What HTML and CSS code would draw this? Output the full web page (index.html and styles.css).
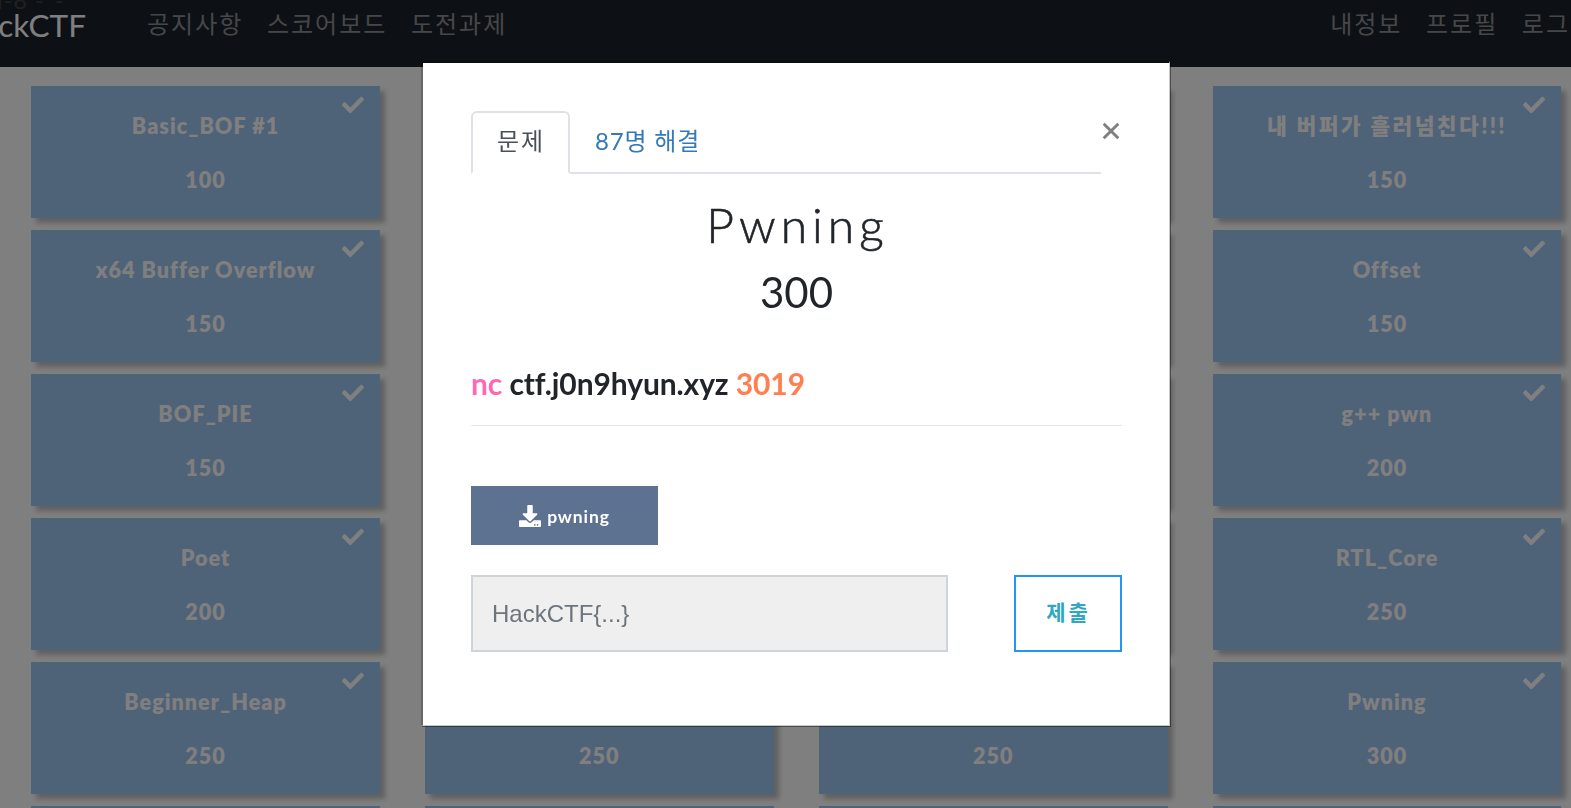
FILE: index.html
```html
<!DOCTYPE html>
<html lang="ko">
<head>
<meta charset="utf-8">
<title>HackCTF</title>
<link rel="stylesheet" href="styles.css">
</head>
<body>
<svg class="defs" aria-hidden="true">
  <symbol id="check" viewBox="0 0 512 512"><path d="M173.898 439.404l-166.4-166.4c-9.997-9.997-9.997-26.206 0-36.204l36.203-36.204c9.997-9.998 26.207-9.998 36.204 0L192 312.69 432.095 72.596c9.997-9.997 26.207-9.997 36.204 0l36.203 36.204c9.997 9.997 9.997 26.206 0 36.204l-294.4 294.401c-9.998 9.997-26.207 9.997-36.204-.001z"/></symbol>
</svg>
<header class="nav">
  <div class="brand-box"><span class="tagline">l-8 -`-</span><a class="brand"><span class="brand-hot">Ha</span>ckCTF</a></div>
  <nav class="links"><a>공지사항</a><a>스코어보드</a><a>도전과제</a></nav>
  <nav class="links links-end"><a>내정보</a><a>프로필</a><a>로그</a></nav>
</header>
<main class="grid">
  <div class="card"><svg class="tick"><use href="#check"/></svg><p>Basic_BOF #1</p><p>100</p></div>
  <div class="card"></div>
  <div class="card"></div>
  <div class="card"><svg class="tick"><use href="#check"/></svg><p class="ko">내 버퍼가 흘러넘친다!!!</p><p>150</p></div>
  <div class="card"><svg class="tick"><use href="#check"/></svg><p>x64 Buffer Overflow</p><p>150</p></div>
  <div class="card"></div>
  <div class="card"></div>
  <div class="card"><svg class="tick"><use href="#check"/></svg><p>Offset</p><p>150</p></div>
  <div class="card"><svg class="tick"><use href="#check"/></svg><p>BOF_PIE</p><p>150</p></div>
  <div class="card"></div>
  <div class="card"></div>
  <div class="card"><svg class="tick"><use href="#check"/></svg><p>g++ pwn</p><p>200</p></div>
  <div class="card"><svg class="tick"><use href="#check"/></svg><p>Poet</p><p>200</p></div>
  <div class="card"></div>
  <div class="card"></div>
  <div class="card"><svg class="tick"><use href="#check"/></svg><p>RTL_Core</p><p>250</p></div>
  <div class="card"><svg class="tick"><use href="#check"/></svg><p>Beginner_Heap</p><p>250</p></div>
  <div class="card card-low"><p>250</p></div>
  <div class="card card-low"><p>250</p></div>
  <div class="card"><svg class="tick"><use href="#check"/></svg><p>Pwning</p><p>300</p></div>
  <div class="card"></div>
  <div class="card"></div>
  <div class="card"></div>
  <div class="card"></div>
</main>
<div class="backdrop">
  <section class="modal" role="dialog">
    <div class="modal-top">
      <div class="tabs"><a class="tab tab-on">문제</a><a class="tab">87명 해결</a></div>
      <svg class="close" viewBox="0 0 16 16"><path d="M1.500 1.500l13 13M14.500 1.500l-13 13"/></svg>
    </div>
    <h2 class="title">Pwning</h2>
    <h3 class="points">300</h3>
    <p class="server"><span class="cmd">nc</span> ctf.j0n9hyun.xyz <span class="port">3019</span></p>
    <a class="file"><svg class="dl" viewBox="0 0 512 512"><path d="M216 0h80c13.300 0 24 10.700 24 24v168h87.700c17.800 0 26.700 21.500 14.100 34.100L269.700 378.300c-7.500 7.500-19.800 7.500-27.300 0L90.100 226.100c-12.600-12.600-3.700-34.100 14.100-34.100H192V24c0-13.300 10.700-24 24-24zm296 376v112c0 13.300-10.700 24-24 24H24c-13.300 0-24-10.700-24-24V376c0-13.300 10.700-24 24-24h146.700l49 49c20.100 20.100 52.500 20.100 72.600 0l49-49H488c13.300 0 24 10.700 24 24zm-124 88c0-11-9-20-20-20s-20 9-20 20 9 20 20 20 20-9 20-20zm64 0c0-11-9-20-20-20s-20 9-20 20 9 20 20 20 20-9 20-20z"/></svg><span>pwning</span></a>
    <form class="answer"><input class="flag" type="text" placeholder="HackCTF{...}"><button class="submit" type="button">제출</button></form>
  </section>
</div>
</body>
</html>
```
FILE: styles.css
```css
* { box-sizing: border-box; }
html, body { height: 100%; overflow: hidden; }
body { margin: 0; background: #fff; font-family: Lato, "Noto Sans CJK KR", sans-serif; color: #212529; }
p, h2, h3 { margin: 0; }
.defs { position: absolute; width: 0; height: 0; }

.nav { display: flex; align-items: flex-start; height: 67px; background: #1a222a; white-space: nowrap; overflow: hidden; }
.brand-box { position: relative; flex: none; width: 86px; display: flex; justify-content: flex-end; }
.brand { font-size: 31.500px; line-height: 51px; color: #fff; }
.brand-hot { color: #f06; }
.tagline { position: absolute; left: -3px; top: -15px; font-size: 24px; line-height: 30px; letter-spacing: .8px; color: #3c4248; }
.links { display: flex; gap: 23.600px; margin-left: 61px; font-size: 24px; line-height: 48px; letter-spacing: 2px; color: #8c8f92; }
.links-end { margin-left: auto; margin-right: 1px; }

.grid { display: grid; grid-template-columns: repeat(4, 348.700px); grid-auto-rows: 132px; gap: 12px 45.150px; height: 741px; padding: 19px 0 0 31.200px; overflow: hidden; }
.card { position: relative; padding-top: 12.500px; background: #9cc4f0; color: #fff; text-align: center; font-size: 21.600px; font-weight: 800; letter-spacing: 1px; box-shadow: 5px 5px 5px rgba(0,0,0,.25); }
.card p { line-height: 54px; }
.card .ko { letter-spacing: 2.300px; }
.card-low { padding-top: 66.500px; }
.tick { position: absolute; right: 16px; top: 8px; width: 22px; height: 22px; fill: #fff; }

.backdrop { position: fixed; inset: 0; background: rgba(0,0,0,.5); padding: 61px 0 0 421px; }
.modal { width: 749px; height: 665px; padding: 48px 47px 0 48px; background: #fff; background-clip: padding-box; border: solid rgba(0,0,0,.2); border-width: 2px 1px 1px 2px; border-right-color: #c8c8c8; border-bottom-color: #c8c8c8; box-shadow: 1px 1px 0 rgba(0,0,0,.4); }
.modal-top { display: flex; align-items: flex-start; height: 63px; }
.tabs { display: flex; flex: none; width: 630px; height: 63px; border-bottom: 2px solid #dee2e6; font-size: 24px; line-height: 55px; letter-spacing: .8px; white-space: nowrap; color: #337ab7; }
.tab { height: 63px; padding: 2px 25px; }
.tab-on { width: 99px; padding: 0 0 0 24px; border: 2px solid #dee2e6; border-bottom-color: #fff; border-radius: 6px 6px 0 0; letter-spacing: 2px; color: #495057; }
.close { width: 18px; height: 18px; margin: 11px 0 0 1px; fill: none; stroke: #7f7f7f; stroke-width: 2.600; }
.title { margin-top: 15px; padding-left: 2px; text-align: center; font-size: 48px; line-height: 72px; font-weight: 300; letter-spacing: 5px; -webkit-text-stroke: .6px #212529; }
.points { margin-top: 3px; text-align: center; font-size: 42px; line-height: 56px; font-weight: 400; }
.server { height: 106px; padding-top: 41px; border-bottom: 1px solid #e5e5e5; font-size: 30px; line-height: 45px; font-weight: 700; letter-spacing: -.1px; font-variant-ligatures: none; }
.cmd { color: #ff69b4; }
.port { color: #ff7f50; }
.file { display: flex; align-items: center; justify-content: center; gap: 6px; width: 187px; height: 59px; margin-top: 60px; background: #5d7290; color: #fff; font-size: 17.500px; font-weight: 700; letter-spacing: .9px; }
.file span { padding-top: 2px; }
.dl { width: 22px; height: 22px; fill: #fff; }
.answer { display: flex; justify-content: space-between; margin-top: 30px; }
.flag { width: 477px; height: 77px; padding: 0 19px; background: #efefef; border: 2px solid #ced4da; border-radius: 0; font: 24px "Liberation Sans", Arial, sans-serif; }
.flag::placeholder { color: #6c757d; }
.submit { width: 108px; height: 77px; padding: 0 4px 5px 5px; background: #fff; border: 2px solid #2196f3; color: #2fa8c0; font: 700 21px Lato, "Noto Sans CJK KR", sans-serif; letter-spacing: 3px; }
```
